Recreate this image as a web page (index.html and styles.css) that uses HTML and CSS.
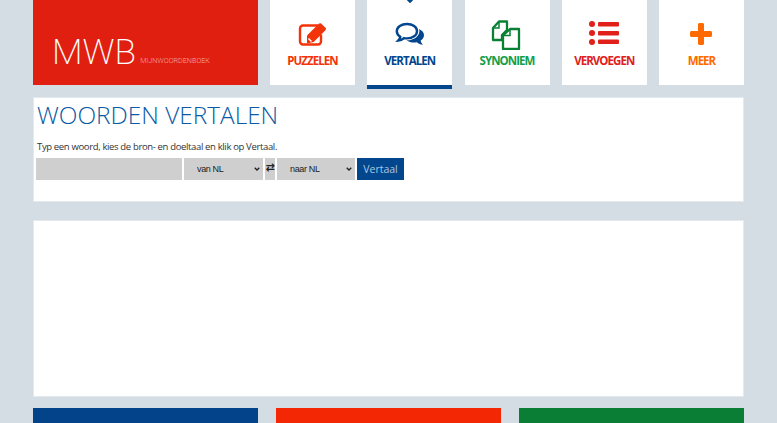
FILE: index.html
```html
<!DOCTYPE html>
<html lang="nl">
<head>
<meta charset="utf-8">
<title>Woorden vertalen</title>
<link rel="stylesheet" href="styles.css">
</head>
<body>
<div class="page">
  <header class="top">
    <a class="logo"><span class="logo-main">MWB</span><span class="logo-sub">MIJNWOORDENBOEK</span></a>
    <nav class="tiles">
      <a class="tile c-orange">
        <svg class="icon" viewBox="0 0 30 26" width="30" height="26"><path d="M20 4.500H5a3 3 0 0 0-3 3v13a3 3 0 0 0 3 3h15a3 3 0 0 0 3-3v-7" fill="none" stroke="currentColor" stroke-width="2.400"/><path d="M9 14.500 21 2.500l1.800-.3 5.200 5-.3 1.800-12 12-6.700 1.500z" fill="currentColor"/><path d="M10.500 17.500l3 3" stroke="#fff" stroke-width="1.500"/></svg>
        <span>PUZZELEN</span>
      </a>
      <a class="tile c-blue active">
        <i class="notch"></i>
        <svg class="icon" viewBox="0 0 30 26" width="30" height="26"><path d="M12 2c5.700 0 10 3.100 10 7.200s-4.300 7.200-10 7.200c-1 0-2 0-3-.3-1.500 1.300-3.500 2.300-5.800 2.500 1-1.100 1.900-2.400 2.100-3.800C3.300 13.500 1.800 11.600 1.800 9.200 1.800 5.100 6.300 2 12 2z" fill="none" stroke="currentColor" stroke-width="2.400"/><path d="M24 7c3 1.300 5 3.600 5 6.200 0 2.200-1.300 4.100-3.300 5.300.2 1.600 1 3 2.200 4.300-2.500-.2-4.400-1.200-6-2.600-3.900.8-7.600 0-10.300-2 7 .2 12.700-3.700 12.800-9.300 0-.7-.1-1.300-.4-1.900z" fill="currentColor"/></svg>
        <span>VERTALEN</span>
      </a>
      <a class="tile c-green">
        <svg class="icon" viewBox="0 0 30 30" width="30" height="30"><path d="M8 1.500h8v8.500l-5 5v5H2V8z" fill="none" stroke="currentColor" stroke-width="2.300" stroke-linejoin="round"/><path d="M8 2v6H2.500" fill="none" stroke="currentColor" stroke-width="1.500"/><path d="M19 9h9v20H12V15.500z" fill="none" stroke="currentColor" stroke-width="2.300" stroke-linejoin="round"/><path d="M19 9.500V15.500H12.500" fill="none" stroke="currentColor" stroke-width="1.500"/></svg>
        <span>SYNONIEM</span>
      </a>
      <a class="tile c-red">
        <svg class="icon" viewBox="0 0 30 24" width="30" height="24"><circle cx="3" cy="3" r="3" fill="currentColor"/><circle cx="3" cy="12" r="3" fill="currentColor"/><circle cx="3" cy="21" r="3" fill="currentColor"/><rect x="9" y="1" width="21" height="4.500" rx="1" fill="currentColor"/><rect x="9" y="10" width="21" height="4.500" rx="1" fill="currentColor"/><rect x="9" y="18.500" width="21" height="4.500" rx="1" fill="currentColor"/></svg>
        <span>VERVOEGEN</span>
      </a>
      <a class="tile c-amber">
        <svg class="icon" viewBox="0 0 24 24" width="24" height="24"><path d="M9 2a2 2 0 0 1 2-1h2a2 2 0 0 1 2 1v7h7a2 2 0 0 1 1 2v2a2 2 0 0 1-1 2h-7v7a2 2 0 0 1-2 1h-2a2 2 0 0 1-2-1v-7H2a2 2 0 0 1-1-2v-2a2 2 0 0 1 1-2h7z" fill="currentColor"/></svg>
        <span>MEER</span>
      </a>
    </nav>
  </header>

  <section class="panel form-panel">
    <h1>WOORDEN VERTALEN</h1>
    <p>Typ een woord, kies de bron- en doeltaal en klik op Vertaal.</p>
    <form class="row">
      <input class="field word" type="text" aria-label="Woord">
      <select class="field lang from" aria-label="Brontaal"><option>van NL</option></select>
      <span class="field swap">⇄</span>
      <select class="field lang to" aria-label="Doeltaal"><option>naar NL</option></select>
      <button class="go" type="button">Vertaal</button>
    </form>
  </section>

  <section class="panel empty-panel"></section>

  <footer class="bottom">
    <div class="b b-blue"></div>
    <div class="b b-red"></div>
    <div class="b b-green"></div>
  </footer>
</div>
</body>
</html>
```
FILE: styles.css
```css
* { box-sizing: border-box; }
html, body { margin: 0; height: 100%; overflow: hidden; }
body { background: #d5dde4; font-family: "Open Sans", sans-serif; }
.page { width: 711px; margin-left: 33px; height: 423px; display: flex; flex-direction: column; }

.top { display: flex; gap: 12px; height: 85px; flex: none; }
.logo { width: 225px; flex: none; background: #e11f10; color: #fff; display: flex; align-items: flex-end; padding: 0 0 11px 19px; }
.logo-main { font-family: Roboto, sans-serif; font-weight: 200; font-size: 35.500px; line-height: 44px; }
.logo-sub { font-family: Roboto, sans-serif; font-weight: 300; font-size: 7.200px; line-height: 10px; margin: 0 0 8px 4px; color: #f6aaa4; }

.tiles { display: flex; flex: 1; justify-content: space-between; }
.tile { position: relative; width: 85px; height: 85px; background: #fff; display: flex; flex-direction: column; align-items: center; }
.tile .icon { position: absolute; top: 21px; left: 50%; transform: translateX(-50%); }
.tile.c-blue .icon { top: 22px; }
.tile.c-green .icon { top: 20px; margin-left: -1px; }
.tile.c-amber .icon { top: 22px; margin-left: -1px; }
.tile span { margin-top: 53px; font-size: 11.500px; line-height: 16px; font-weight: 700; letter-spacing: -.95px; }
.c-orange { color: #f3340a; }
.c-blue { color: #02468d; }
.c-green { color: #0a8035; }
.c-green span { color: #12a04a; }
.c-red { color: #e1201a; }
.c-amber { color: #ff6a00; }
.active { height: 89px; border-bottom: 4px solid #02468d; }
.notch { position: absolute; top: -4px; left: 50%; margin-left: -3px; width: 6px; height: 6px; background: #02468d; transform: rotate(45deg); }

.panel { background: #fff; border: 1px solid #e4e9ed; }
.form-panel { margin-top: 12px; height: 105px; padding: 0 2px; }
h1 { margin: -1px 0 0 1px; font-size: 24.400px; line-height: 35px; font-weight: 300; color: #0a5aa5; white-space: nowrap; }
p { margin: 8px 0 0 1px; font-size: 9.500px; line-height: 14px; font-weight: 500; color: #333; letter-spacing: -.35px; white-space: nowrap; }
.row { display: flex; gap: 2px; margin-top: 4px; height: 22px; }
.field { height: 22px; border: 0; background-color: #cfcfcf; border-radius: 0; margin: 0; padding: 0; }
.word { width: 146px; }
.lang { appearance: none; font-family: "Liberation Sans", sans-serif; font-size: 9px; letter-spacing: -.35px; color: #222; padding-left: 13px; background-image: url("data:image/svg+xml,%3Csvg xmlns='http://www.w3.org/2000/svg' width='6' height='4'%3E%3Cpath d='M.7.7 3 3 5.300.7' fill='none' stroke='%23222' stroke-width='1.300'/%3E%3C/svg%3E"); background-repeat: no-repeat; background-position: right 3px center; }
.from { width: 79px; }
.to { width: 78px; }
.swap { width: 10px; font-size: 11px; font-weight: 700; line-height: 20px; text-align: center; color: #222; font-family: "DejaVu Sans", sans-serif; overflow: hidden; }
.go { width: 47px; height: 22px; border: 0; padding: 0; background: #02468d; color: #a9c6e3; font-family: "Open Sans", sans-serif; font-size: 10.500px; }

.empty-panel { margin-top: 18px; height: 177px; }

.bottom { margin-top: 11px; display: flex; justify-content: space-between; flex: 1; }
.b { width: 225px; }
.b-blue { background: #02438a; }
.b-red { background: #f42705; }
.b-green { background: #097e34; }
```
